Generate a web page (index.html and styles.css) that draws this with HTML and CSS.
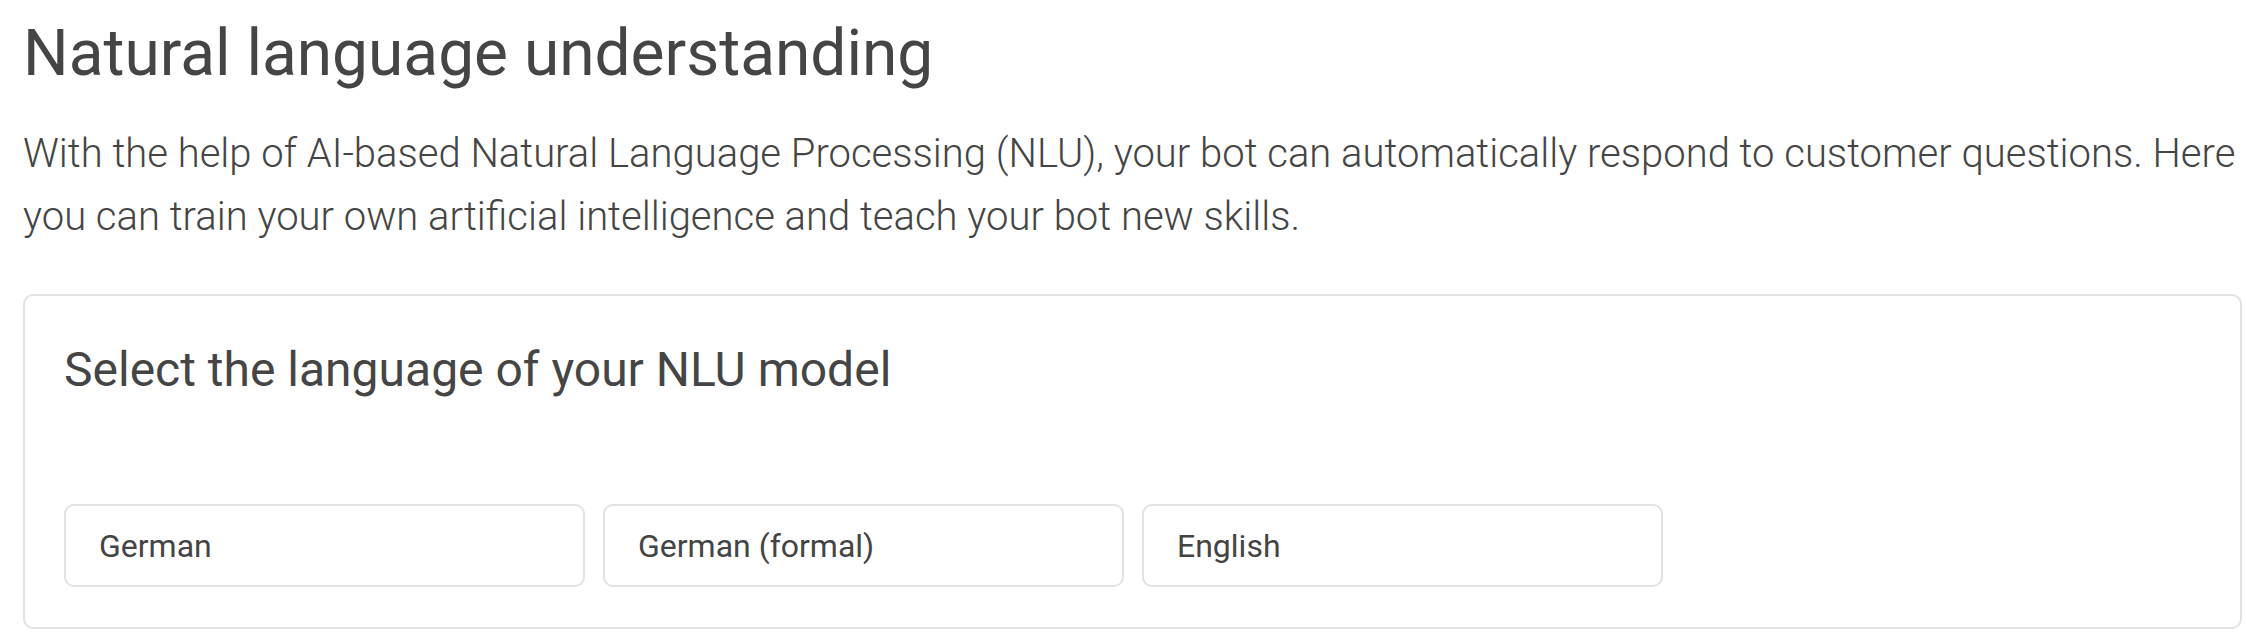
FILE: index.html
```html
<!DOCTYPE html>
<html lang="en">
<head>
<meta charset="utf-8">
<title>Natural language understanding</title>
<link rel="stylesheet" href="styles.css">
</head>
<body>
<main class="page">
  <h1 class="page-title">Natural language understanding</h1>
  <p class="intro">With the help of AI-based Natural Language Processing (NLU), your bot can automatically respond to customer questions. Here you can train your own artificial intelligence and teach your bot new skills.</p>
  <section class="card">
    <h2 class="card-title">Select the language of your NLU model</h2>
    <div class="lang-options">
      <button class="lang-btn" type="button">German</button>
      <button class="lang-btn" type="button">German (formal)</button>
      <button class="lang-btn" type="button">English</button>
    </div>
  </section>
</main>
</body>
</html>
```

FILE: styles.css
```css
html, body {
  margin: 0;
  padding: 0;
  background: #ffffff;
}

body {
  font-family: Roboto, "Liberation Sans", Arial, sans-serif;
  color: #444444;
}

.page {
  padding: 0 4px 0 23px;
}

.page-title {
  margin: 16px 0 0;
  font-size: 64px;
  line-height: 75px;
  font-weight: 400;
  color: #454545;
}

.intro {
  margin: 31px 0 0;
  font-size: 40px;
  line-height: 63px;
  font-weight: 300;
  color: #454545;
}

.card {
  margin-top: 46px;
  border: 2px solid #e2e2e2;
  border-radius: 10px;
  padding: 46px 39px 40px;
}

.card-title {
  margin: 0;
  font-size: 48px;
  line-height: 56px;
  font-weight: 400;
  color: #454545;
}

.lang-options {
  margin-top: 106px;
  display: flex;
  gap: 18px;
}

.lang-btn {
  box-sizing: border-box;
  width: 521px;
  height: 83px;
  display: flex;
  align-items: center;
  padding: 0 0 0 33px;
  background: #ffffff;
  border: 2px solid #e2e2e2;
  border-radius: 10px;
  font-family: Roboto, "Liberation Sans", Arial, sans-serif;
  font-size: 32px;
  font-weight: 400;
  color: #444444;
  text-align: left;
  cursor: pointer;
}
```
